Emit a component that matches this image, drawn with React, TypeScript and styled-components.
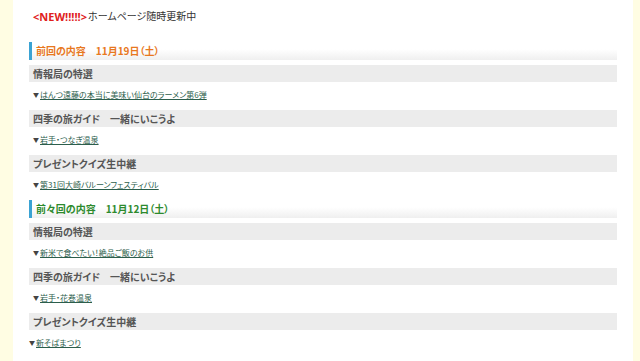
import styled, { createGlobalStyle } from "styled-components";

type Topic = {
	title: string;
	link: string;
	flush?: boolean;
};

type Episode = {
	label: string;
	tone: "orange" | "green";
	topics: Topic[];
};

const episodes: Episode[] = [
	{
		label: "前回の内容　11月19日（土）",
		tone: "orange",
		topics: [
			{ title: "情報局の特選", link: "はんつ遠藤の本当に美味い仙台のラーメン第6弾" },
			{ title: "四季の旅ガイド　一緒にいこうよ", link: "岩手・つなぎ温泉" },
			{ title: "プレゼントクイズ生中継", link: "第31回大崎バルーンフェスティバル" },
		],
	},
	{
		label: "前々回の内容　11月12日（土）",
		tone: "green",
		topics: [
			{ title: "情報局の特選", link: "新米で食べたい！絶品ご飯のお供" },
			{ title: "四季の旅ガイド　一緒にいこうよ", link: "岩手・花巻温泉" },
			{ title: "プレゼントクイズ生中継", link: "新そばまつり", flush: true },
		],
	},
];

const App = () => {
	return (
		<>
			<GlobalStyle />
			<Page>
				<Column>
					<News>
						<NewMark>&lt;NEW!!!!!&gt;</NewMark>
						<span>ホームページ随時更新中</span>
					</News>
					{episodes.map((episode) => (
						<Section key={episode.label}>
							<Heading tone={episode.tone}>{episode.label}</Heading>
							{episode.topics.map((topic) => (
								<div key={topic.link}>
									<Bar>{topic.title}</Bar>
									<LinkRow flush={topic.flush}>
										<Arrow>▼</Arrow>
										<TopicLink href="#">{topic.link}</TopicLink>
									</LinkRow>
								</div>
							))}
						</Section>
					))}
				</Column>
			</Page>
		</>
	);
};

const GlobalStyle = createGlobalStyle`
	html, body {
		margin: 0;
		padding: 0;
		background: #fffde3;
	}
	body {
		font-family: "Noto Sans CJK JP", "Noto Sans", sans-serif;
		font-feature-settings: "palt";
		line-height: 1;
	}
`;

const Page = styled.div`
	display: flex;
	min-height: 361px;
	padding: 0 7px 0 13px;
	background: #fffde3;
`;

const Column = styled.main`
	flex: 1;
	background: #ffffff;
	padding: 10px 16px 12px;
`;

const News = styled.div`
	display: flex;
	align-items: center;
	height: 12px;
	margin: 0 0 20px 4px;
	font-size: 10px;
	color: #333;
`;

const NewMark = styled.span`
	color: #e0201c;
	font-weight: bold;
	font-family: "Open Sans", "Noto Sans", sans-serif;
	font-size: 11px;
	margin-right: 1px;
`;

const Section = styled.section`
	display: flex;
	flex-direction: column;
`;

const Heading = styled.h2<{ tone: "orange" | "green" }>`
	margin: 0 0 5px;
	height: 18px;
	display: flex;
	align-items: center;
	padding-left: 4px;
	border-left: 3px solid #3ba3d3;
	background: linear-gradient(#ffffff, #ffffff 40%, #efefef);
	font-size: 10px;
	font-weight: bold;
	color: ${({ tone }) => (tone === "orange" ? "#e8781e" : "#2d8a2d")};
`;

const Bar = styled.div`
	height: 17px;
	display: flex;
	align-items: center;
	padding-left: 4px;
	background: #ececec;
	font-size: 10px;
	font-weight: bold;
	color: #555;
`;

const LinkRow = styled.div<{ flush?: boolean }>`
	display: flex;
	align-items: center;
	height: 12px;
	padding: 7px 0 9px ${({ flush }) => (flush ? "0" : "4px")};
	font-size: 8px;
`;

const Arrow = styled.span`
	color: #444;
	font-size: 6px;
	margin-right: 1px;
`;

const TopicLink = styled.a`
	color: #2c5e4c;
	text-decoration: underline;
`;

export default App;
